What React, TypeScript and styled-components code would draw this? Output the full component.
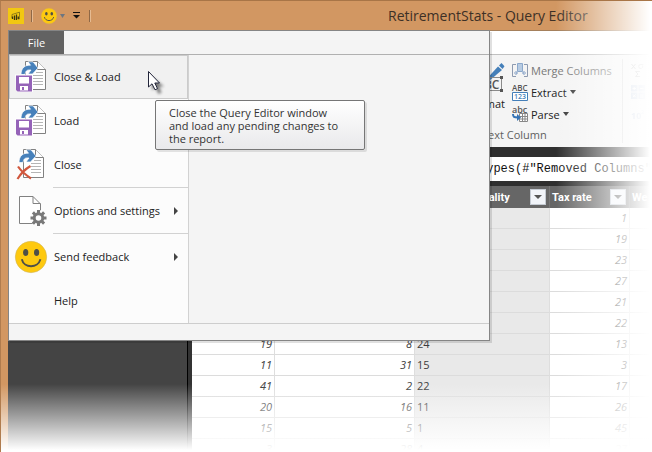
import React from "react";
import styled, { createGlobalStyle } from "styled-components";

const Global = createGlobalStyle`
  * { box-sizing: border-box; }
  html, body, #root { height: 100%; }
  body { margin: 0; background: #fff; overflow: hidden; font-family: "Open Sans", "Noto Sans", sans-serif; font-size: 11px; color: #222; }
  button { font: inherit; color: inherit; background: none; border: 0; padding: 0; margin: 0; text-align: left; white-space: nowrap; }
  svg { display: block; flex: none; overflow: visible; }
`;

const Frame = styled.div`
  position: relative;
  display: flex;
  flex-direction: column;
  height: 100%;
  overflow: hidden;
  padding-left: 7px;
  background: #d29762;
  border-left: 1px solid #b07c4e;
  border-top: 1px solid #a87547;
`;

const Fade = styled.div`
  position: absolute;
  inset: -1px 0 0 -1px;
  pointer-events: none;
  background:
    linear-gradient(to left, #fff 2px, rgba(255, 255, 255, 0) 96px),
    linear-gradient(to top, #fff 2px, rgba(255, 255, 255, 0) 68px);
`;

const TitleBar = styled.header`
  display: flex;
  align-items: center;
  height: 29px;
  flex: none;
`;

const QuickTools = styled.div`
  display: flex;
  align-items: center;
  flex: none;
  width: 380px;
`;

const ToolButton = styled.button<{ $gap?: number }>`
  display: flex;
  align-items: center;
  gap: 3px;
  margin-right: ${(p) => p.$gap ?? 0}px;
`;

const ToolDivider = styled.span<{ $gap?: number }>`
  width: 2px;
  height: 12px;
  border-left: 1px solid #8f6846;
  border-right: 1px solid #e6bb92;
  margin-right: ${(p) => p.$gap ?? 0}px;
`;

const Title = styled.h1`
  margin: 0;
  font-size: 14px;
  line-height: 20px;
  font-weight: 400;
  color: #3d3026;
  white-space: nowrap;
`;

const TabStrip = styled.div`
  flex: none;
  height: 25px;
  background: #fff;
  border-top: 1px solid #a5805c;
  border-bottom: 1px solid #c0c0c0;
`;

const Ribbon = styled.section`
  display: flex;
  flex: none;
  height: 92px;
  background: #f4f4f4;
`;

const RibbonGroup = styled.div`
  display: flex;
  flex-direction: column;
  flex: none;
  width: 615px;
  margin: 4px 0 4px;
  padding-left: 458px;
  border-right: 1px solid #d5d5d5;
`;

const GroupBody = styled.div`
  display: flex;
  height: 70px;
  gap: 7px;
`;

const GroupLabel = styled.div`
  line-height: 16px;
  padding-left: 16px;
  color: #5f5f5f;
`;

const LargeButton = styled.button`
  display: flex;
  flex-direction: column;
  align-items: flex-end;
  justify-content: flex-start;
  width: 39px;
  line-height: 16px;
  padding-top: 3px;
`;

const ButtonStack = styled.div`
  display: flex;
  flex-direction: column;
`;

const SmallButton = styled.button<{ $muted?: boolean }>`
  display: flex;
  align-items: center;
  height: 22px;
  gap: 3px;
  color: ${(p) => (p.$muted ? "#777" : "#222")};
`;

const IconStack = styled.div`
  display: flex;
  flex-direction: column;
  padding: 0 0 0 8px;
  margin-top: 4px;
  opacity: 0.6;
`;

const IconButton = styled.button`
  display: flex;
  align-items: center;
  height: 22px;
`;

const FormulaBar = styled.div`
  display: flex;
  flex: none;
  height: 39px;
  padding: 10px 0 5px 184px;
  background: #2f2f2f;
`;

const FormulaInput = styled.input`
  flex: 1;
  min-width: 0;
  border: 0;
  outline: 0;
  background: #fff;
  color: #111;
  padding: 0 0 0 287px;
  font-family: "Liberation Mono", monospace;
  font-size: 12px;
`;

const Workspace = styled.main`
  display: flex;
  flex: 1;
  min-height: 0;
  overflow: hidden;
  background: #333;
`;

const QueriesPane = styled.aside`
  flex: none;
  width: 180px;
  margin-right: 4px;
  background: #444;
  border-right: 1px solid #000;
`;

const GridArea = styled.div`
  flex: 1;
  min-width: 0;
`;

const Grid = styled.table`
  width: 100%;
  table-layout: fixed;
  border-collapse: separate;
  border-spacing: 0;
`;

const HeadCell = styled.th`
  height: 22px;
  padding: 0 3px 0 2px;
  background: #666;
  border-right: 1px solid #777;
  color: #fff;
  font-family: Roboto, sans-serif;
  font-weight: 700;
  text-align: left;
  white-space: nowrap;
`;

const HeadInner = styled.div`
  display: flex;
  align-items: center;
  justify-content: space-between;
`;

const FilterButton = styled.button`
  display: flex;
  align-items: center;
  justify-content: center;
  width: 16px;
  height: 16px;
  background: #f1f4f9;
  border: 1px solid #c5cbd3;
`;

const Cell = styled.td<{ $text?: boolean }>`
  height: 21px;
  padding: 0 2px;
  border-right: 1px solid #dedede;
  border-bottom: 1px solid #dcdcdc;
  background: ${(p) => (p.$text ? "#e9e9e9" : "#fff")};
  color: #3c3c3c;
  line-height: 18px;
  text-align: ${(p) => (p.$text ? "left" : "right")};
  font-style: ${(p) => (p.$text ? "normal" : "italic")};
`;

const FileMenu = styled.div`
  position: absolute;
  top: 29px;
  left: 7px;
  width: 482px;
  background: #f4f4f4;
  border: 1px solid #858585;
  box-shadow: 2px 2px 0 rgba(0, 0, 0, 0.12);
`;

const MenuTabs = styled.div`
  display: flex;
  height: 24px;
  border-bottom: 1px solid #b0b0b0;
`;

const FileTab = styled.button`
  width: 55px;
  background: #626262;
  color: #fff;
  text-align: center;
`;

const MenuBody = styled.div`
  display: flex;
`;

const MenuList = styled.nav`
  display: flex;
  flex-direction: column;
  width: 180px;
  background: #fcfcfc;
  border-right: 1px solid #d2d2d2;
`;

const MenuItem = styled.button<{ $active?: boolean; $tall?: boolean }>`
  display: flex;
  align-items: center;
  height: ${(p) => (p.$tall ? 45 : 44)}px;
  padding-right: 9px;
  padding-bottom: ${(p) => (p.$tall ? 0 : 2)}px;
  border: 1px solid ${(p) => (p.$active ? "#cbcbcb" : "transparent")};
  background: ${(p) => (p.$active ? "#f1f1f1" : "transparent")};
`;

const MenuIcon = styled.span`
  display: flex;
  justify-content: center;
  width: 44px;
  padding-right: 2px;
`;

const MenuLabel = styled.span`
  flex: 1;
`;

const MenuDivider = styled.hr`
  width: 135px;
  height: 1px;
  margin: 0 0 0 auto;
  border: 0;
  background: #d2d2d2;
`;

const MenuFooter = styled.div`
  height: 17px;
  border-top: 1px solid #cdcdcd;
`;

const Tooltip = styled.div`
  position: absolute;
  top: 69px;
  left: 146px;
  width: 210px;
  padding: 5px 20px 4px 13px;
  border: 1px solid #767676;
  border-radius: 2px;
  background: linear-gradient(#fff, #e9e9eb);
  box-shadow: 2px 2px 0 rgba(0, 0, 0, 0.1);
  line-height: 13px;
  color: #333;
`;

const Pointer = styled.svg`
  position: absolute;
  top: 39px;
  left: 137px;
  pointer-events: none;
`;

const Caret = ({ color = "#333", w = 5 }: { color?: string; w?: number }) => (
  <svg width={w} height="4" viewBox="0 0 6 4" preserveAspectRatio="none"><path d="M0 0h6L3 4z" fill={color} /></svg>
);

const SubmenuArrow = () => (
  <svg width="4" height="8" viewBox="0 0 4 8"><path d="M0 0l4 4-4 4z" fill="#444" /></svg>
);

const Smile = ({ size }: { size: number }) => (
  <svg width={size} height={size} viewBox="0 0 32 32">
    <circle cx="16" cy="16" r="15.7" fill="#fec90f" stroke="#c9b060" strokeWidth=".5" />
    <ellipse cx="10.7" cy="11.5" rx="2.6" ry="3.5" fill="#4f4f48" />
    <ellipse cx="21.6" cy="11.5" rx="2.6" ry="3.5" fill="#4f4f48" />
    <path d="M6.8 18.2C9 27.5 23 27.5 25.400 18.200" fill="none" stroke="#4f4f48" strokeWidth="1.9" />
  </svg>
);

const AppLogo = () => (
  <svg width="16" height="16" viewBox="0 0 16 16">
    <rect width="16" height="16" fill="#f2c811" />
    <path d="M4 6.500L11.500 4.200V11H10M4 6.500v3.500" fill="none" stroke="#7a6a1a" strokeWidth=".8" />
    <path d="M4.500 8.500v2.500M6.500 7.500v4.500M8.500 6.500v5.500M10.300 8.500v2.500" stroke="#3d3610" strokeWidth="1.300" />
  </svg>
);

const Overflow = () => (
  <svg width="8" height="7" viewBox="0 0 8 7">
    <path d="M0 .5h7" stroke="#111" />
    <path d="M0 3h7L3.500 6.500z" fill="#111" />
  </svg>
);

const LoadDocument = ({ kind }: { kind: "save" | "discard" }) => (
  <svg width="30" height="31" viewBox="0 0 30 31">
    <g transform={kind === "discard" ? "translate(-2 0)" : undefined}>
      <path d="M9.500.500H21.500L29.500 8.500V28.500H9.500z" fill="#fff" stroke="#818181" />
      <path d="M21.500.500v8h8" fill="#fff" stroke="#818181" />
      <path d="M20 11.500h7M17 14.500h10M17 17.500h10M17 20.500h10M17 23.500h10" stroke="#b5b5b5" />
      <path d="M5 13.500C5 6.500 9.500 3.800 14.500 4.200L12 .800H17L22 7L16.500 13H12L15 9C11 8.500 9.500 9.800 9 13.500z" fill="#4781bb" stroke="#fff" strokeWidth=".7" />
    </g>
    {kind === "save" ? (
      <g>
        <path d="M-1 13.500H17V31H1.500L0 29.500z" fill="#fff" />
        <path d="M0 14.500H16V30.500H1.500L0 29z" fill="#9563b8" />
        <path d="M3 16h10v6.500H3z" fill="#fff" />
        <path d="M4 25h8v4.500H4z" fill="#fff" />
        <path d="M6 26h2v3H6z" fill="#9563b8" />
      </g>
    ) : (
      <path d="M2 17.500C5 22 10 26 15 29.500M14.500 17C8.500 20.500 4.500 25 1.500 30" fill="none" stroke="#d1573d" strokeWidth="2.200" />
    )}
  </svg>
);

const SettingsDocument = () => (
  <svg width="24" height="30" viewBox="0 0 24 30">
    <path d="M.500.500H14L21.500 8V27.500H.500z" fill="#fff" stroke="#818181" />
    <path d="M14 .500V7.500h7.500" fill="none" stroke="#818181" />
    <circle cx="19.500" cy="22" r="8" fill="#fcfcfc" />
    <circle cx="19.500" cy="22" r="4.300" fill="none" stroke="#787878" strokeWidth="3" />
    <path d="M19.500 14v3M19.500 27v3M11.500 22h3M24.500 22h3M13.900 16.400l2.100 2.100M23 25.500l2.100 2.100M25.100 16.400L23 18.500M16 25.500l-2.100 2.100" stroke="#787878" strokeWidth="3" />
  </svg>
);

const FormatIcon = () => (
  <svg width="36" height="34" viewBox="0 0 36 34">
    <path d="M13 23L18 16.500L29 4.500L33 8L20 19z" fill="#447fb9" />
    <path d="M30 3.500L32.500 1L35.500 4.300L33.500 7z" fill="#447fb9" />
    <path d="M6 15.500H32.500V28.500H6z" fill="none" stroke="#8a8a8a" />
    <text x="7" y="27" fontFamily="Open Sans" fontSize="12" fontWeight="600" fill="#555">ABC</text>
    <path d="M31 14h3v3h-3zM31 27h3v3h-3z" fill="#555" />
  </svg>
);

const MergeIcon = () => (
  <svg width="16" height="14" viewBox="0 0 16 14">
    <path d="M4 1.500H.5v12H4M12 1.500h3.500v12H12" fill="none" stroke="#8d9ab0" />
    <path d="M5.500.5h5v8h-5z" fill="#b7cbe2" stroke="#8ba8cc" />
    <path d="M2 10h3M3.500 8l2 2-2 2M14 10h-3M12.500 8l-2 2 2 2" fill="none" stroke="#7e9cc5" />
  </svg>
);

const ExtractIcon = () => (
  <svg width="16" height="17" viewBox="0 0 16 17">
    <text x="0" y="7" fontFamily="Open Sans" fontSize="8" fontWeight="600" fill="#555">ABC</text>
    <path d="M.5 8.500h15v8H.5z" fill="#fff" stroke="#447fb9" />
    <text x="2" y="15" fontFamily="Open Sans" fontSize="7" fontWeight="600" fill="#447fb9">123</text>
  </svg>
);

const ParseIcon = () => (
  <svg width="16" height="16" viewBox="0 0 16 16">
    <text x="0" y="7" fontFamily="Open Sans" fontSize="9" fontWeight="600" fill="#555">abc</text>
    <path d="M7.500 7.500h8v8h-8zM7.500 10.500h8M7.500 13h8M10.500 8v7.500M13 8v7.500" fill="#fff" stroke="#888" />
    <path d="M1 8c0 3 1 3.500 5 3.500" fill="none" stroke="#3674b5" strokeWidth="2" />
    <path d="M5 8l4 3.500L5 15z" fill="#3674b5" />
  </svg>
);

const SigmaIcon = () => (
  <svg width="14" height="14" viewBox="0 0 14 14">
    <path d="M.5 1l4 5M4.500 1l-4 5M12.500 1.500H10a2 2 0 1 0 1.500 1M9 8.500H4.500l2.500 2.500-2.500 2.500H9" fill="none" stroke="#777" />
  </svg>
);

const CalculatorIcon = () => (
  <svg width="14" height="14" viewBox="0 0 14 14">
    <path d="M0 0h6.500v6.500H0zM7.500 0H14v6.500H7.500zM0 7.500h6.500V14H0zM7.500 7.500H14V14H7.500z" fill="#9db3d3" />
    <path d="M1.500 3.500h3.500M3.200 2v3M9 3.500h3.500M2 9.500l2.500 2.500M4.500 9.500L2 12M9 10h3.500M9 12h3.500" stroke="#fff" />
  </svg>
);

const PowerIcon = () => (
  <svg width="16" height="14" viewBox="0 0 16 14">
    <text x="0" y="12" fontFamily="Open Sans" fontSize="9" fontWeight="700" fill="#8fa6ca">10</text>
    <text x="10" y="7" fontFamily="Open Sans" fontSize="6" fill="#8fa6ca">2</text>
  </svg>
);

const PointerArrow = () => (
  <Pointer width="24" height="28" viewBox="0 0 24 28">
    <defs>
      <filter id="soft" x="-50%" y="-50%" width="200%" height="200%"><feGaussianBlur stdDeviation="1.700" /></filter>
    </defs>
    <path d="M6 7v13l3.500-2.500 3 6.500 3-1.500-2.500-6h5z" fill="#000" opacity=".5" filter="url(#soft)" />
    <path d="M2.500 1.500v15.500l3.500-3.200 3 6 2.500-1.200-2.700-5.600H13.500z" fill="#fff" stroke="#22253a" />
  </Pointer>
);

type Row = [string, string, string, string];
const rows: Row[] = [
  ["", "", "", "1"],
  ["", "", "", "19"],
  ["", "", "", "23"],
  ["", "", "", "27"],
  ["", "", "", "21"],
  ["", "", "", "22"],
  ["19", "8", "24", "13"],
  ["11", "31", "15", "3"],
  ["41", "2", "22", "17"],
  ["20", "16", "11", "26"],
  ["15", "5", "1", "45"],
  ["3", "28", "4", "27"],
];

const Header = ({ label }: { label: string }) => (
  <HeadCell scope="col">
    <HeadInner>
      {label}
      <FilterButton aria-label={`Filter ${label}`}><Caret color="#555" w={8} /></FilterButton>
    </HeadInner>
  </HeadCell>
);

export default function App() {
  return (
    <>
      <Global />
      <Frame>
        <TitleBar>
          <QuickTools>
            <ToolButton $gap={7} aria-label="Application menu"><AppLogo /></ToolButton>
            <ToolDivider $gap={8} />
            <ToolButton $gap={8} aria-label="Send a smile"><Smile size={16} /><Caret color="#6d7680" w={5} /></ToolButton>
            <ToolButton $gap={8} aria-label="Customize toolbar"><Overflow /></ToolButton>
            <ToolDivider />
          </QuickTools>
          <Title>RetirementStats - Query Editor</Title>
        </TitleBar>
        <TabStrip />
        <Ribbon>
          <RibbonGroup>
            <GroupBody>
              <LargeButton><FormatIcon />Format</LargeButton>
              <ButtonStack>
                <SmallButton $muted disabled><MergeIcon />Merge Columns</SmallButton>
                <SmallButton><ExtractIcon />Extract <Caret w={6} /></SmallButton>
                <SmallButton><ParseIcon />Parse <Caret w={6} /></SmallButton>
              </ButtonStack>
            </GroupBody>
            <GroupLabel>Text Column</GroupLabel>
          </RibbonGroup>
          <IconStack>
            <IconButton aria-label="Statistics"><SigmaIcon /></IconButton>
            <IconButton aria-label="Standard"><CalculatorIcon /></IconButton>
            <IconButton aria-label="Scientific"><PowerIcon /></IconButton>
          </IconStack>
        </Ribbon>
        <FormulaBar>
          <FormulaInput aria-label="Formula" readOnly value={'Types(#"Removed Columns"'} />
        </FormulaBar>
        <Workspace>
          <QueriesPane />
          <GridArea>
            <Grid>
              <colgroup>
                <col width="83" />
                <col width="140" />
                <col width="135" />
                <col width="80" />
                <col />
              </colgroup>
              <thead>
                <tr>
                  <HeadCell /><HeadCell />
                  <Header label="Health care quality" />
                  <Header label="Tax rate" />
                  <HeadCell scope="col">We</HeadCell>
                </tr>
              </thead>
              <tbody>
                {rows.map((r, i) => (
                  <tr key={i}>
                    <Cell>{r[0]}</Cell>
                    <Cell>{r[1]}</Cell>
                    <Cell $text>{r[2]}</Cell>
                    <Cell>{r[3]}</Cell>
                    <Cell />
                  </tr>
                ))}
              </tbody>
            </Grid>
          </GridArea>
        </Workspace>
        <Fade />
        <FileMenu>
          <MenuTabs><FileTab>File</FileTab></MenuTabs>
          <MenuBody>
            <MenuList aria-label="File">
              <MenuItem $active><MenuIcon><LoadDocument kind="save" /></MenuIcon><MenuLabel>Close &amp; Load</MenuLabel></MenuItem>
              <MenuItem><MenuIcon><LoadDocument kind="save" /></MenuIcon><MenuLabel>Load</MenuLabel></MenuItem>
              <MenuItem><MenuIcon><LoadDocument kind="discard" /></MenuIcon><MenuLabel>Close</MenuLabel></MenuItem>
              <MenuDivider />
              <MenuItem $tall><MenuIcon><SettingsDocument /></MenuIcon><MenuLabel>Options and settings</MenuLabel><SubmenuArrow /></MenuItem>
              <MenuDivider />
              <MenuItem $tall><MenuIcon><Smile size={32} /></MenuIcon><MenuLabel>Send feedback</MenuLabel><SubmenuArrow /></MenuItem>
              <MenuItem><MenuIcon /><MenuLabel>Help</MenuLabel></MenuItem>
            </MenuList>
          </MenuBody>
          <MenuFooter />
          <Tooltip role="tooltip">Close the Query Editor window and load any pending changes to the report.</Tooltip>
          <PointerArrow />
        </FileMenu>
      </Frame>
    </>
  );
}
